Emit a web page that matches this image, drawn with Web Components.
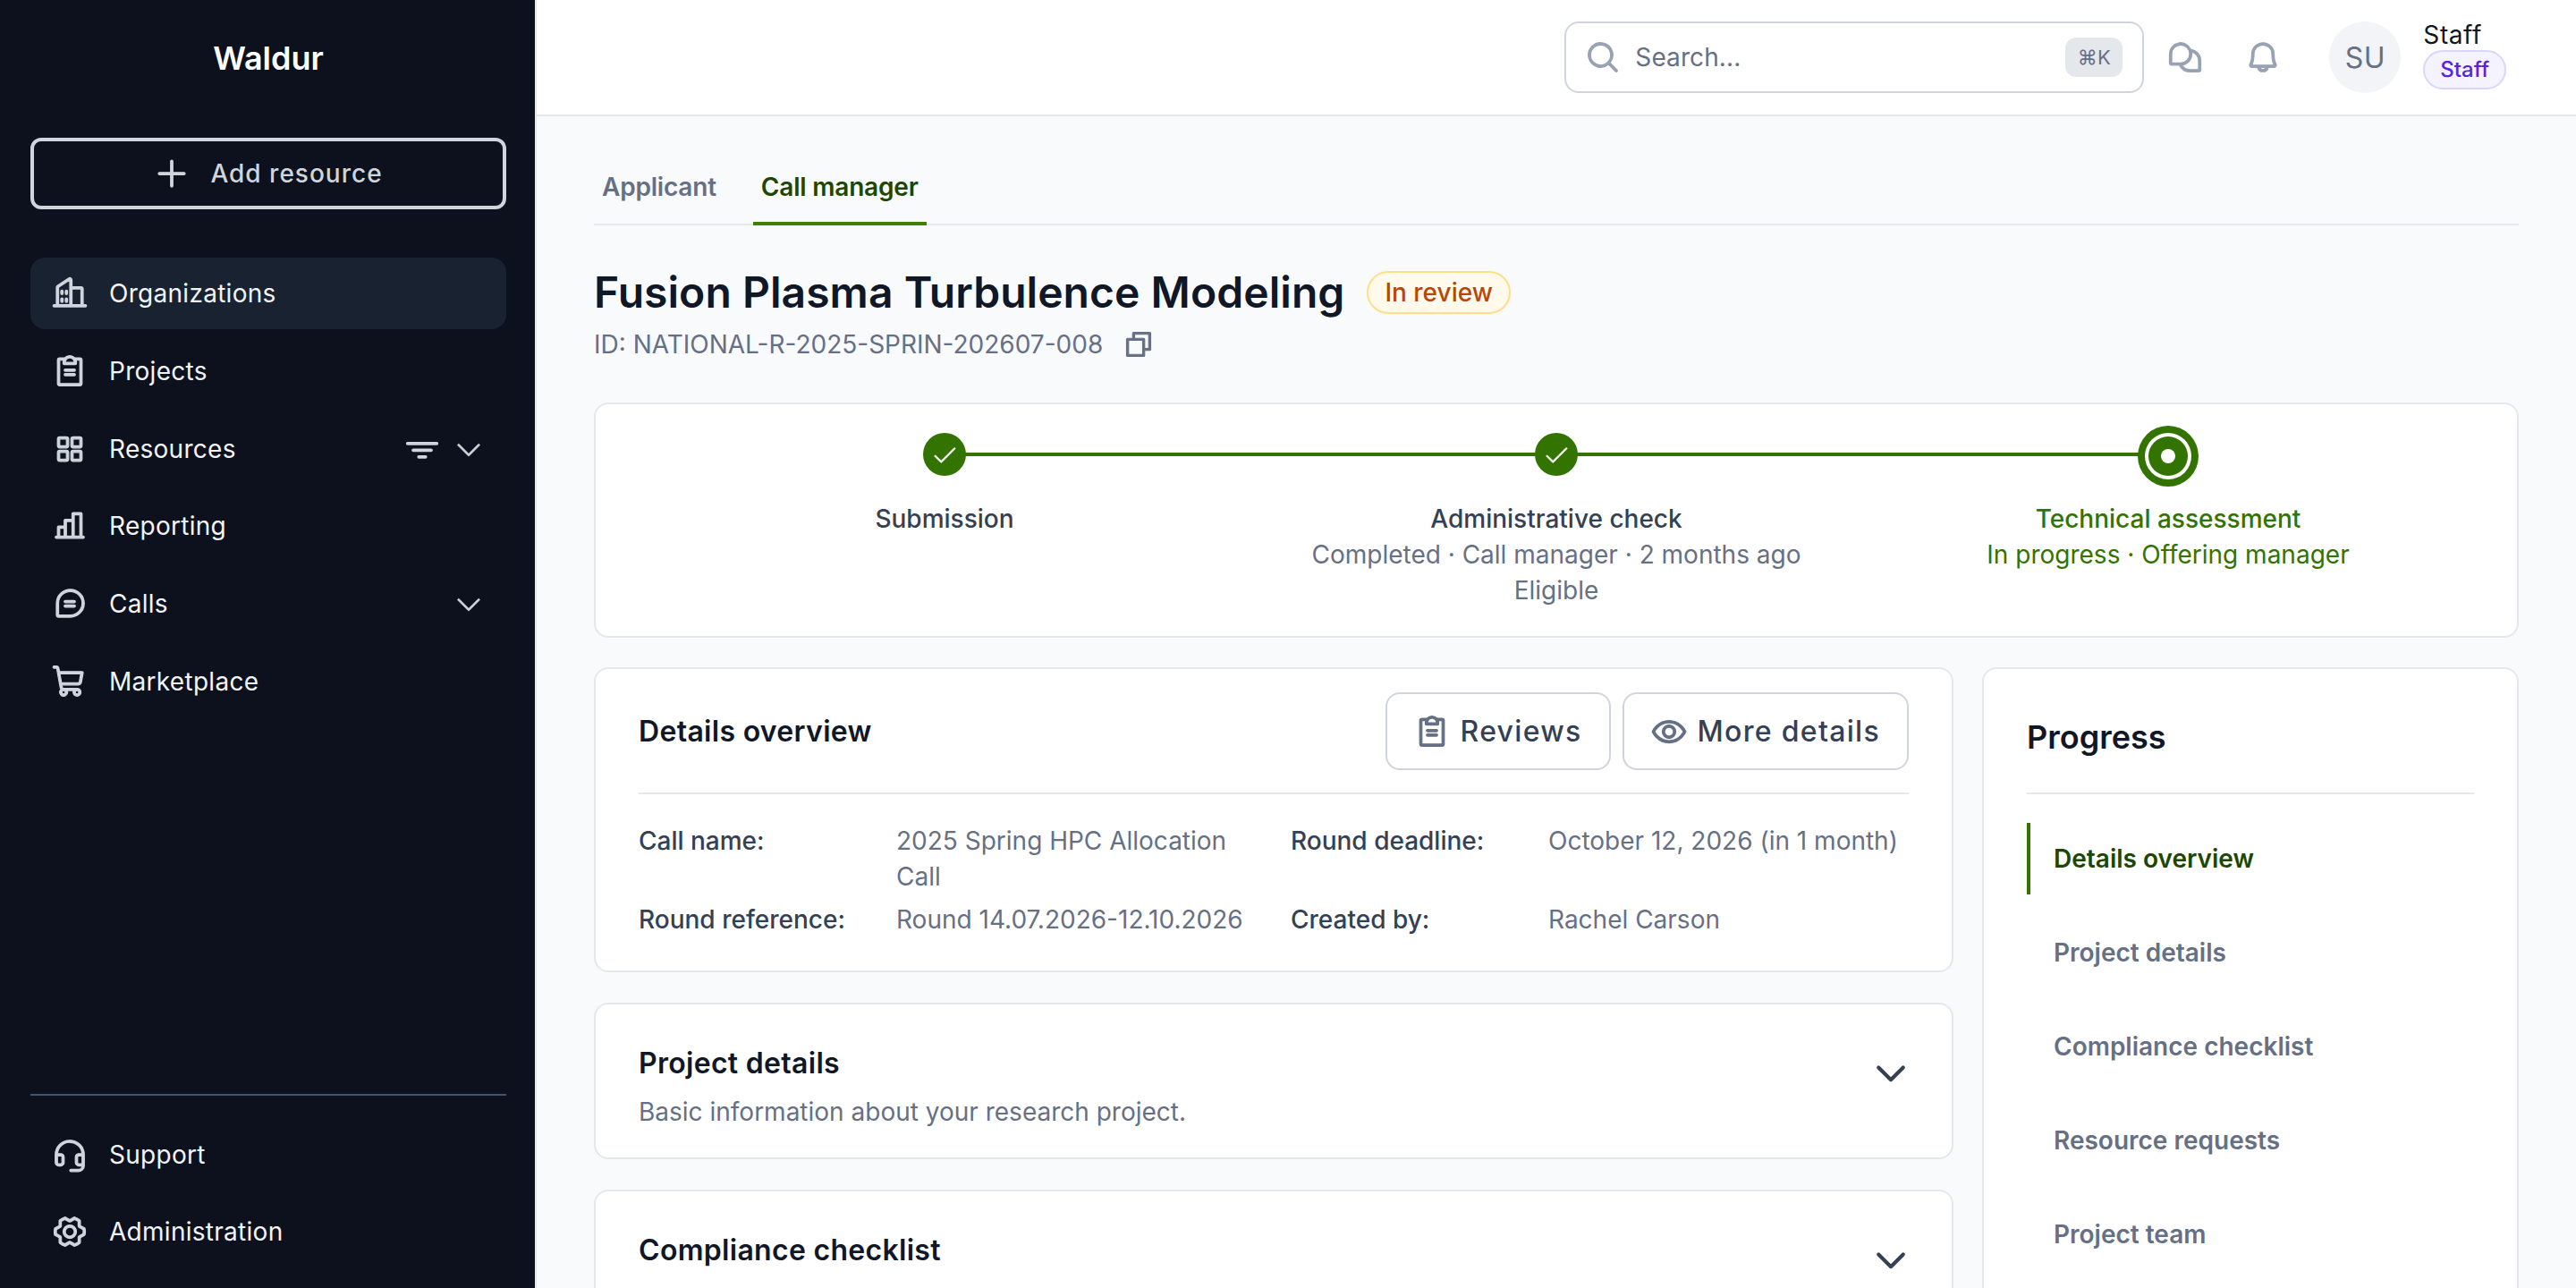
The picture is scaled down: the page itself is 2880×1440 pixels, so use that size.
<!DOCTYPE html>
<html lang="en">
<head>
<meta charset="utf-8">
<title>Waldur</title>
<style>
    html, body {
        margin: 0;
        height: 1440px;
        overflow: hidden;
        font-family: Inter, "Liberation Sans", sans-serif;
        background: #f9fafb;
    }
</style>
</head>
<body>
<app-shell>
    <side-bar slot="side"></side-bar>
    <top-bar slot="top"></top-bar>
    <proposal-page slot="main"></proposal-page>
</app-shell>

<script>
const ICONS = {
    buildings: "M240,208H224V96a16,16,0,0,0-16-16H144V32a16,16,0,0,0-24.88-13.32L39.12,72A16,16,0,0,0,32,85.34V208H16a8,8,0,0,0,0,16H240a8,8,0,0,0,0-16ZM208,96V208H144V96ZM48,85.34,128,32V208H48ZM112,112v16a8,8,0,0,1-16,0V112a8,8,0,1,1,16,0Zm-32,0v16a8,8,0,0,1-16,0V112a8,8,0,1,1,16,0Zm0,56v16a8,8,0,0,1-16,0V168a8,8,0,0,1,16,0Zm32,0v16a8,8,0,0,1-16,0V168a8,8,0,0,1,16,0Z",
    clipboard: "M168,152a8,8,0,0,1-8,8H96a8,8,0,0,1,0-16h64A8,8,0,0,1,168,152Zm-8-40H96a8,8,0,0,0,0,16h64a8,8,0,0,0,0-16Zm56-64V216a16,16,0,0,1-16,16H56a16,16,0,0,1-16-16V48A16,16,0,0,1,56,32H92.26a47.92,47.92,0,0,1,71.48,0H200A16,16,0,0,1,216,48ZM96,64h64a32,32,0,0,0-64,0ZM200,48H173.25A47.93,47.93,0,0,1,176,64v8a8,8,0,0,1-8,8H88a8,8,0,0,1-8-8V64a47.93,47.93,0,0,1,2.75-16H56V216H200Z",
    squares: "M104,40H56A16,16,0,0,0,40,56v48a16,16,0,0,0,16,16h48a16,16,0,0,0,16-16V56A16,16,0,0,0,104,40Zm0,64H56V56h48Zm96-64H152a16,16,0,0,0-16,16v48a16,16,0,0,0,16,16h48a16,16,0,0,0,16-16V56A16,16,0,0,0,200,40Zm0,64H152V56h48Zm-96,32H56a16,16,0,0,0-16,16v48a16,16,0,0,0,16,16h48a16,16,0,0,0,16-16V152A16,16,0,0,0,104,136Zm0,64H56V152h48Zm96-64H152a16,16,0,0,0-16,16v48a16,16,0,0,0,16,16h48a16,16,0,0,0,16-16V152A16,16,0,0,0,200,136Zm0,64H152V152h48Z",
    chart: "M224,200h-8V40a8,8,0,0,0-8-8H152a8,8,0,0,0-8,8V80H96a8,8,0,0,0-8,8v40H48a8,8,0,0,0-8,8v64H32a8,8,0,0,0,0,16H224a8,8,0,0,0,0-16ZM160,48h40V200H160ZM104,96h40V200H104ZM56,144H88v56H56Z",
    teardrop: "M168,112a8,8,0,0,1-8,8H96a8,8,0,0,1,0-16h64A8,8,0,0,1,168,112Zm-8,24H96a8,8,0,0,0,0,16h64a8,8,0,0,0,0-16Zm72-12A100.11,100.11,0,0,1,132,224H47.67A15.69,15.69,0,0,1,32,208.33V124a100,100,0,0,1,200,0Zm-16,0a84,84,0,0,0-168,0v84h84A84.09,84.09,0,0,0,216,124Z",
    cart: "M222.14,58.87A8,8,0,0,0,216,56H54.68L49.79,29.14A16,16,0,0,0,34.05,16H16a8,8,0,0,0,0,16h18L59.56,172.29a24,24,0,0,0,5.33,11.27,28,28,0,1,0,44.4,8.44h45.42A27.75,27.75,0,0,0,152,204a28,28,0,1,0,28-28H83.17a8,8,0,0,1-7.87-6.57L72.13,152h116a24,24,0,0,0,23.61-19.71l12.16-66.86A8,8,0,0,0,222.14,58.87ZM96,204a12,12,0,1,1-12-12A12,12,0,0,1,96,204Zm96,0a12,12,0,1,1-12-12A12,12,0,0,1,192,204Zm4-74.57A8,8,0,0,1,188.1,136H69.22L57.59,72H206.41Z",
    headset: "M201.89,54.66A103.43,103.43,0,0,0,128.79,24H128A104,104,0,0,0,24,128v56a24,24,0,0,0,24,24H64a24,24,0,0,0,24-24V144a24,24,0,0,0-24-24H40.36A88.12,88.12,0,0,1,128,40h.67a87.71,87.71,0,0,1,87,80H192a24,24,0,0,0-24,24v40a24,24,0,0,0,24,24h24a24,24,0,0,1-24,24H136a8,8,0,0,0,0,16h56a40,40,0,0,0,40-40V128A103.41,103.41,0,0,0,201.89,54.66ZM64,136a8,8,0,0,1,8,8v40a8,8,0,0,1-8,8H48a8,8,0,0,1-8-8V136Zm128,56a8,8,0,0,1-8-8V144a8,8,0,0,1,8-8h24v56Z",
    gear: "M128,80a48,48,0,1,0,48,48A48.05,48.05,0,0,0,128,80Zm0,80a32,32,0,1,1,32-32A32,32,0,0,1,128,160Zm109.94-52.79a8,8,0,0,0-3.89-5.4l-29.83-17-.12-33.62a8,8,0,0,0-2.83-6.08,111.91,111.91,0,0,0-36.72-20.67,8,8,0,0,0-6.46.59L128,41.85,97.88,25a8,8,0,0,0-6.47-.6A111.92,111.92,0,0,0,54.73,45.15a8,8,0,0,0-2.83,6.07l-.15,33.65-29.83,17a8,8,0,0,0-3.89,5.4,106.47,106.47,0,0,0,0,41.56,8,8,0,0,0,3.89,5.4l29.83,17,.12,33.63a8,8,0,0,0,2.83,6.08,111.91,111.91,0,0,0,36.72,20.67,8,8,0,0,0,6.46-.59L128,214.15,158.12,231a7.91,7.91,0,0,0,3.9,1,8.09,8.09,0,0,0,2.57-.42,112.1,112.1,0,0,0,36.68-20.73,8,8,0,0,0,2.83-6.07l.15-33.65,29.83-17a8,8,0,0,0,3.89-5.4A106.47,106.47,0,0,0,237.94,107.21Zm-15,34.91-28.57,16.25a8,8,0,0,0-3,3c-.58,1-1.19,2.06-1.81,3.06a7.94,7.94,0,0,0-1.22,4.21l-.15,32.25a95.89,95.89,0,0,1-25.37,14.3L134,199.13a8,8,0,0,0-3.91-1h-.19c-1.21,0-2.43,0-3.64,0a8.08,8.08,0,0,0-4.1,1l-28.84,16.1A96,96,0,0,1,67.88,201l-.11-32.2a8,8,0,0,0-1.22-4.22c-.62-1-1.23-2-1.8-3.06a8.09,8.09,0,0,0-3-3.06l-28.6-16.29a90.49,90.49,0,0,1,0-28.26L61.67,97.63a8,8,0,0,0,3-3c.58-1,1.19-2.06,1.81-3.06a7.94,7.94,0,0,0,1.22-4.21l.15-32.25a95.89,95.89,0,0,1,25.37-14.3L122,56.87a8,8,0,0,0,4.1,1c1.21,0,2.43,0,3.64,0a8.08,8.08,0,0,0,4.1-1l28.84-16.1A96,96,0,0,1,188.12,55l.11,32.2a8,8,0,0,0,1.22,4.22c.62,1,1.23,2,1.8,3.06a8.09,8.09,0,0,0,3,3.06l28.6,16.29A90.49,90.49,0,0,1,222.9,142.12Z",
    search: "M229.66,218.34l-50.07-50.06a88.11,88.11,0,1,0-11.31,11.31l50.06,50.07a8,8,0,0,0,11.32-11.32ZM40,112a72,72,0,1,1,72,72A72.08,72.08,0,0,1,40,112Z",
    chats: "M169.57,72.59A80,80,0,0,0,16,104v66a14,14,0,0,0,14,14H86.67A80.14,80.14,0,0,0,160,232h66a14,14,0,0,0,14-14V152A80,80,0,0,0,169.57,72.59ZM32,104a64,64,0,1,1,64,64H32ZM224,216H160a64.14,64.14,0,0,1-55.68-32.43A79.93,79.93,0,0,0,174.7,89.71,64,64,0,0,1,224,152Z",
    bell: "M221.8,175.94C216.25,166.38,208,139.33,208,104a80,80,0,1,0-160,0c0,35.34-8.26,62.38-13.81,71.94A16,16,0,0,0,48,200H88.81a40,40,0,0,0,78.38,0H208a16,16,0,0,0,13.8-24.06ZM128,216a24,24,0,0,1-22.62-16h45.24A24,24,0,0,1,128,216ZM48,184c7.7-13.24,16-43.92,16-80a64,64,0,1,1,128,0c0,36.05,8.28,66.73,16,80Z",
    copy: "M216,32H88a8,8,0,0,0-8,8V80H40a8,8,0,0,0-8,8V216a8,8,0,0,0,8,8H168a8,8,0,0,0,8-8V176h40a8,8,0,0,0,8-8V40A8,8,0,0,0,216,32ZM160,208H48V96H160Zm48-48H176V88a8,8,0,0,0-8-8H96V48H208Z",
    eye: "M247.31,124.76c-.35-.79-8.82-19.58-27.65-38.41C194.57,61.26,162.88,48,128,48S61.43,61.26,36.34,86.35C17.51,105.18,9,124,8.69,124.76a8,8,0,0,0,0,6.5c.35.79,8.82,19.57,27.65,38.4C61.43,194.74,93.12,208,128,208s66.57-13.26,91.66-38.34c18.83-18.83,27.3-37.61,27.65-38.4A8,8,0,0,0,247.31,124.76ZM128,192c-30.78,0-57.67-11.19-79.93-33.25A133.47,133.47,0,0,1,25,128,133.33,133.33,0,0,1,48.07,97.25C70.33,75.19,97.22,64,128,64s57.67,11.19,79.93,33.25A133.46,133.46,0,0,1,231.05,128C223.84,141.46,192.43,192,128,192Zm0-112a48,48,0,1,0,48,48A48.05,48.05,0,0,0,128,80Zm0,80a32,32,0,1,1,32-32A32,32,0,0,1,128,160Z",
    plus: "M224,128a8,8,0,0,1-8,8H136v80a8,8,0,0,1-16,0V136H40a8,8,0,0,1,0-16h80V40a8,8,0,0,1,16,0v80h80A8,8,0,0,1,224,128Z",
    caret: "M213.66,101.66l-80,80a8,8,0,0,1-11.32,0l-80-80A8,8,0,0,1,53.66,90.34L128,164.69l74.34-74.35a8,8,0,0,1,11.32,11.32Z",
    funnel: "M200,136a8,8,0,0,1-8,8H64a8,8,0,0,1,0-16H192A8,8,0,0,1,200,136Zm32-56H24a8,8,0,0,0,0,16H232a8,8,0,0,0,0-16Zm-80,96H104a8,8,0,0,0,0,16h48a8,8,0,0,0,0-16Z",
    check: "M229.66,77.66l-128,128a8,8,0,0,1-11.32,0l-56-56a8,8,0,0,1,11.32-11.32L96,188.69,218.34,66.34a8,8,0,0,1,11.32,11.32Z"
};

class PIcon extends HTMLElement {
    constructor() {
        super();
        this.attachShadow({mode: "open"});
    }

    connectedCallback() {
        const size = this.getAttribute("size") || 40;
        // the stroke brings the regular outlines up to the weight of the reference
        const weight = this.getAttribute("weight") || 8;
        this.shadowRoot.innerHTML = `
            <style>
                :host {
                    display: inline-flex;
                    flex: none;
                    width: ${size}px;
                    height: ${size}px;
                }
                svg {
                    display: block;
                    width: 100%;
                    height: 100%;
                    fill: currentColor;
                    stroke: currentColor;
                    stroke-width: ${weight};
                    stroke-linejoin: round;
                }
            </style>
            <svg viewBox="0 0 256 256"><path d="${ICONS[this.getAttribute("name")]}"/></svg>`;
    }
}
customElements.define("p-icon", PIcon);

class AppShell extends HTMLElement {
    constructor() {
        super();
        this.attachShadow({mode: "open"}).innerHTML = `
            <style>
                :host {
                    display: grid;
                    grid-template-columns: 600px 1fr;
                    grid-template-rows: 130px 1fr;
                    height: 1440px;
                    overflow: hidden;
                }
                .side { grid-row: 1 / 3; min-height: 0; }
                .main { min-height: 0; overflow: hidden; }
            </style>
            <div class="side"><slot name="side"></slot></div>
            <div><slot name="top"></slot></div>
            <div class="main"><slot name="main"></slot></div>`;
    }
}
customElements.define("app-shell", AppShell);

class NavItem extends HTMLElement {
    constructor() {
        super();
        this.attachShadow({mode: "open"});
    }

    connectedCallback() {
        this.shadowRoot.innerHTML = `
            <style>
                :host {
                    display: flex;
                    align-items: center;
                    height: 80px;
                    padding: 0 24px;
                    gap: 24px;
                    border-radius: 16px;
                    font-size: 28px;
                    letter-spacing: .28px;
                    color: #f2f4f7;
                }
                :host([active]) { background: #182230; }
                p-icon { color: #d0d5dd; }
                .label { flex: 1; }
                .extra { display: flex; align-items: center; gap: 14px; color: #d0d5dd; }
            </style>
            <p-icon name="${this.getAttribute("icon")}" size="40"></p-icon>
            <span class="label">${this.getAttribute("label")}</span>
            <span class="extra"><slot></slot></span>`;
    }
}
customElements.define("nav-item", NavItem);

class SideBar extends HTMLElement {
    constructor() {
        super();
        this.attachShadow({mode: "open"}).innerHTML = `
            <style>
                :host {
                    display: flex;
                    flex-direction: column;
                    box-sizing: border-box;
                    height: 1440px;
                    padding: 43px 32px 23px 34px;
                    background: #0c111d;
                    border-right: 2px solid #e4e7ec;
                }
                .logo {
                    font-size: 36px;
                    line-height: 44px;
                    font-weight: 600;
                    color: #fff;
                    text-align: center;
                }
                .add {
                    display: flex;
                    align-items: center;
                    justify-content: center;
                    gap: 23px;
                    box-sizing: border-box;
                    height: 80px;
                    margin: 67px 0 54px;
                    border: 4px solid #d0d5dd;
                    border-radius: 12px;
                    font-size: 28px;
                    font-weight: 500;
                    letter-spacing: 1px;
                    color: #d0d5dd;
                }
                nav { display: flex; flex-direction: column; gap: 6.8px; flex: 1; }
                .bottom {
                    display: flex;
                    flex-direction: column;
                    gap: 6px;
                    padding-top: 26px;
                    border-top: 2px solid #475467;
                }
            </style>
            <div class="logo">Waldur</div>
            <div class="add"><p-icon name="plus" size="40"></p-icon><span>Add resource</span></div>
            <nav>
                <nav-item icon="buildings" label="Organizations" active></nav-item>
                <nav-item icon="clipboard" label="Projects"></nav-item>
                <nav-item icon="squares" label="Resources"><p-icon name="funnel" size="40"></p-icon><p-icon name="caret" size="36" weight="4"></p-icon></nav-item>
                <nav-item icon="chart" label="Reporting"></nav-item>
                <nav-item icon="teardrop" label="Calls"><p-icon name="caret" size="36" weight="4"></p-icon></nav-item>
                <nav-item icon="cart" label="Marketplace"></nav-item>
            </nav>
            <div class="bottom">
                <nav-item icon="headset" label="Support"></nav-item>
                <nav-item icon="gear" label="Administration"></nav-item>
            </div>`;
    }
}
customElements.define("side-bar", SideBar);

class TopBar extends HTMLElement {
    constructor() {
        super();
        this.attachShadow({mode: "open"}).innerHTML = `
            <style>
                :host {
                    display: flex;
                    justify-content: flex-end;
                    align-items: center;
                    box-sizing: border-box;
                    height: 130px;
                    padding: 0 78px 0 0;
                    background: #fff;
                    border-bottom: 2px solid #e4e7ec;
                }
                .search {
                    display: flex;
                    align-items: center;
                    box-sizing: border-box;
                    width: 648px;
                    height: 80px;
                    padding: 0 22px 0 21px;
                    gap: 16px;
                    border: 2px solid #d0d5dd;
                    border-radius: 16px;
                    font-size: 28px;
                    letter-spacing: .1px;
                    color: #667085;
                }
                .search p-icon { color: #98a2b3; }
                .search span { flex: 1; }
                kbd {
                    display: flex;
                    align-items: center;
                    justify-content: center;
                    width: 64px;
                    height: 44px;
                    border-radius: 12px;
                    background: #e4e7ec;
                    font: 22px Inter, "DejaVu Sans", sans-serif;
                    color: #667085;
                }
                .ico { color: #98a2b3; }
                .chat { margin-left: 26px; }
                .bell { margin-left: 47px; }
                .avatar {
                    display: flex;
                    align-items: center;
                    justify-content: center;
                    width: 80px;
                    height: 80px;
                    margin-left: 54px;
                    border-radius: 50%;
                    background: #f2f4f7;
                    font-size: 32px;
                    font-weight: 400;
                    letter-spacing: .5px;
                    color: #667085;
                }
                .user { margin-left: 25px; margin-top: -6px; display: flex; flex-direction: column; align-items: flex-start; }
                .name { font-size: 28px; line-height: 34px; font-weight: 400; letter-spacing: .6px; color: #101828; }
                .role {
                    box-sizing: border-box;
                    height: 44px;
                    padding: 0 17px;
                    border: 2px solid #d9d6fe;
                    border-radius: 22px;
                    background: #f4f3ff;
                    font-size: 24px;
                    line-height: 40px;
                    font-weight: 500;
                    color: #5925dc;
                }
            </style>
            <div class="search">
                <p-icon name="search" size="40"></p-icon>
                <span>Search...</span>
                <kbd>⌘K</kbd>
            </div>
            <p-icon class="ico chat" name="chats" size="40"></p-icon>
            <p-icon class="ico bell" name="bell" size="40"></p-icon>
            <div class="avatar">SU</div>
            <div class="user">
                <div class="name">Staff</div>
                <div class="role">Staff</div>
            </div>`;
    }
}
customElements.define("top-bar", TopBar);

class StepItem extends HTMLElement {
    constructor() {
        super();
        this.attachShadow({mode: "open"});
    }

    connectedCallback() {
        const active = this.hasAttribute("active");
        const marker = active
            ? `<svg width="68" height="68" viewBox="0 0 68 68"><circle cx="34" cy="34" r="34" fill="#337300"/><circle cx="34" cy="34" r="26" fill="#fff"/><circle cx="34" cy="34" r="22" fill="#337300"/><circle cx="34" cy="34" r="8" fill="#fff"/></svg>`
            : `<span class="dot"><p-icon name="check" size="30" weight="4"></p-icon></span>`;
        this.shadowRoot.innerHTML = `
            <style>
                :host {
                    display: flex;
                    flex-direction: column;
                    align-items: center;
                    position: relative;
                    text-align: center;
                }
                /* connector to the next step, runs under the marker */
                :host([line])::after {
                    content: "";
                    position: absolute;
                    left: 50%;
                    top: 30px;
                    width: 100%;
                    height: 4px;
                    background: #337300;
                }
                .marker {
                    position: relative;
                    z-index: 1;
                    display: flex;
                    align-items: flex-start;
                    height: 68px;
                    margin-bottom: 16px;
                }
                svg { display: block; }
                .dot {
                    display: flex;
                    align-items: center;
                    justify-content: center;
                    width: 48px;
                    height: 48px;
                    margin-top: 8px;
                    border-radius: 50%;
                    background: #337300;
                    color: #fff;
                }
                .title { font-size: 28px; line-height: 40px; font-weight: 500; color: ${active ? "#337300" : "#344054"}; }
                .sub { font-size: 28px; line-height: 40px; color: ${active ? "#337300" : "#667085"}; }
                ::slotted(*) { display: block; }
            </style>
            <div class="marker">${marker}</div>
            <div class="title">${this.getAttribute("label")}</div>
            <div class="sub"><slot></slot></div>`;
    }
}
customElements.define("step-item", StepItem);

class StepTracker extends HTMLElement {
    constructor() {
        super();
        this.attachShadow({mode: "open"}).innerHTML = `
            <style>
                :host {
                    display: grid;
                    grid-template-columns: repeat(3, 1fr);
                    box-sizing: border-box;
                    height: 263px;
                    padding: 24px 48px 0;
                    background: #fff;
                    border: 2px solid #e4e7ec;
                    border-radius: 16px;
                }
            </style>
            <slot></slot>`;
    }
}
customElements.define("step-tracker", StepTracker);

class OutlineButton extends HTMLElement {
    constructor() {
        super();
        this.attachShadow({mode: "open"});
    }

    connectedCallback() {
        this.shadowRoot.innerHTML = `
            <style>
                :host {
                    display: inline-flex;
                    align-items: center;
                    gap: 12px;
                    box-sizing: border-box;
                    height: 87px;
                    padding: 0 30px;
                    background: #fff;
                    border: 2px solid #d0d5dd;
                    border-radius: 16px;
                    font-size: 32px;
                    font-weight: 500;
                    letter-spacing: 1.3px;
                    color: #344054;
                }
                p-icon { color: #667085; }
            </style>
            <p-icon name="${this.getAttribute("icon")}" size="40"></p-icon>
            <span><slot></slot></span>`;
    }
}
customElements.define("outline-button", OutlineButton);

class DetailsCard extends HTMLElement {
    constructor() {
        super();
        this.attachShadow({mode: "open"}).innerHTML = `
            <style>
                :host {
                    display: block;
                    box-sizing: border-box;
                    padding: 26px 48px 37px;
                    background: #fff;
                    border: 2px solid #e4e7ec;
                    border-radius: 16px;
                }
                header {
                    display: flex;
                    align-items: center;
                    justify-content: space-between;
                    padding-bottom: 25px;
                    margin-bottom: 32px;
                    border-bottom: 2px solid #e4e7ec;
                }
                h2 { margin: 0; font-size: 32px; line-height: 48px; font-weight: 600; letter-spacing: .3px; color: #101828; }
                .actions { display: flex; gap: 13px; }
                .grid {
                    display: grid;
                    grid-template-columns: 288px 409px 320px 403px;
                    row-gap: 8px;
                    font-size: 28px;
                    line-height: 40px;
                }
                .k { font-weight: 500; color: #344054; }
                .v { color: #667085; }
                .k.second { margin-left: 32px; }
            </style>
            <header>
                <h2>Details overview</h2>
                <div class="actions">
                    <outline-button icon="clipboard">Reviews</outline-button>
                    <outline-button icon="eye">More details</outline-button>
                </div>
            </header>
            <div class="grid">
                <div class="k">Call name:</div><div class="v">2025 Spring HPC Allocation Call</div>
                <div class="k second">Round deadline:</div><div class="v">October 12, 2026 (in 1 month)</div>
                <div class="k">Round reference:</div><div class="v">Round 14.07.2026-12.10.2026</div>
                <div class="k second">Created by:</div><div class="v">Rachel Carson</div>
            </div>`;
    }
}
customElements.define("details-card", DetailsCard);

class CollapseCard extends HTMLElement {
    constructor() {
        super();
        this.attachShadow({mode: "open"});
    }

    connectedCallback() {
        this.shadowRoot.innerHTML = `
            <style>
                :host {
                    display: flex;
                    align-items: flex-start;
                    justify-content: space-between;
                    box-sizing: border-box;
                    padding: 42px 46px 31px 48px;
                    background: #fff;
                    border: 2px solid #e4e7ec;
                    border-radius: 16px;
                }
                h2 { margin: 0 0 10px; font-size: 32px; line-height: 48px; font-weight: 600; letter-spacing: .3px; color: #101828; }
                p { margin: 0; min-height: 40px; font-size: 28px; line-height: 40px; color: #667085; }
                p-icon { color: #344054; margin-top: 12px; }
            </style>
            <div>
                <h2>${this.getAttribute("heading")}</h2>
                <p><slot></slot></p>
            </div>
            <p-icon name="caret" size="44"></p-icon>`;
    }
}
customElements.define("collapse-card", CollapseCard);

class ProgressNav extends HTMLElement {
    constructor() {
        super();
        this.attachShadow({mode: "open"}).innerHTML = `
            <style>
                :host {
                    display: block;
                    box-sizing: border-box;
                    padding: 52px 48px 0;
                    background: #fff;
                    border: 2px solid #e4e7ec;
                    border-radius: 16px;
                }
                h2 {
                    margin: 0 0 32px;
                    padding-bottom: 38px;
                    border-bottom: 2px solid #e4e7ec;
                    font-size: 36px;
                    line-height: 48px;
                    font-weight: 600;
                    color: #101828;
                }
                ul { list-style: none; margin: 0; padding: 0; display: flex; flex-direction: column; gap: 25px; }
                li {
                    display: flex;
                    align-items: center;
                    box-sizing: border-box;
                    height: 80px;
                    padding-left: 26px;
                    border-left: 4px solid transparent;
                    font-size: 28px;
                    font-weight: 600;
                    color: #667085;
                }
                li.on { color: #1c4700; border-left-color: #337300; }
            </style>
            <h2>Progress</h2>
            <ul>
                <li class="on">Details overview</li>
                <li>Project details</li>
                <li>Compliance checklist</li>
                <li>Resource requests</li>
                <li>Project team</li>
            </ul>`;
    }
}
customElements.define("progress-nav", ProgressNav);

class ProposalPage extends HTMLElement {
    constructor() {
        super();
        this.attachShadow({mode: "open"}).innerHTML = `
            <style>
                :host {
                    display: block;
                    box-sizing: border-box;
                    padding: 42px 64px 0;
                    background: #f9fafb;
                }
                .tabs {
                    display: flex;
                    gap: 32px;
                    border-bottom: 2px solid #e4e7ec;
                    font-size: 28px;
                    font-weight: 600;
                    letter-spacing: -.2px;
                    line-height: 40px;
                    color: #667085;
                }
                .tab {
                    box-sizing: border-box;
                    height: 80px;
                    margin-bottom: -2px;
                    padding: 17px 9px 0;
                    border-bottom: 4px solid transparent;
                }
                .tab.on { color: #1c4700; border-bottom-color: #408000; }
                .heading { display: flex; align-items: center; gap: 25px; margin-top: 47px; }
                h1 { margin: 0; font-size: 48px; line-height: 56px; font-weight: 600; letter-spacing: .05px; color: #101828; }
                .badge {
                    box-sizing: border-box;
                    height: 48px;
                    padding: 0 18px;
                    background: #fffaeb;
                    border: 2px solid #fedf89;
                    border-radius: 24px;
                    font-size: 28px;
                    line-height: 44px;
                    font-weight: 500;
                    color: #b54708;
                }
                .id {
                    display: flex;
                    align-items: center;
                    gap: 22px;
                    margin: 10px 0 45px;
                    font-size: 28px;
                    line-height: 40px;
                    color: #667085;
                }
                .columns {
                    display: grid;
                    grid-template-columns: 1520px 600px;
                    column-gap: 32px;
                    margin-top: 33px;
                }
                .stack { display: flex; flex-direction: column; gap: 34px; }
            </style>
            <div class="tabs">
                <div class="tab">Applicant</div>
                <div class="tab on">Call manager</div>
            </div>
            <div class="heading">
                <h1>Fusion Plasma Turbulence Modeling</h1>
                <span class="badge">In review</span>
            </div>
            <div class="id">
                <span>ID: NATIONAL-R-2025-SPRIN-202607-008</span>
                <p-icon name="copy" size="36"></p-icon>
            </div>
            <step-tracker>
                <step-item label="Submission" line></step-item>
                <step-item label="Administrative check" line>
                    <span>Completed · Call manager · 2 months ago</span>
                    <span>Eligible</span>
                </step-item>
                <step-item label="Technical assessment" active>
                    <span>In progress · Offering manager</span>
                </step-item>
            </step-tracker>
            <div class="columns">
                <div class="stack">
                    <details-card></details-card>
                    <collapse-card heading="Project details">Basic information about your research project.</collapse-card>
                    <collapse-card heading="Compliance checklist"></collapse-card>
                </div>
                <progress-nav></progress-nav>
            </div>`;
    }
}
customElements.define("proposal-page", ProposalPage);
</script>
</body>
</html>
